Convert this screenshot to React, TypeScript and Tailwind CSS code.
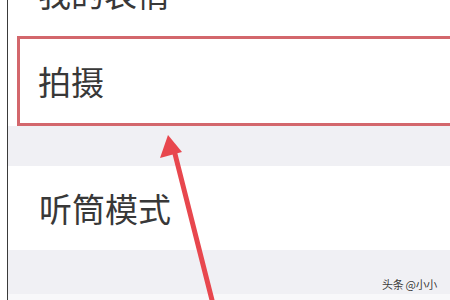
import React from 'react';

const cjk = { fontFamily: '"Noto Sans CJK SC", "Noto Sans", sans-serif' };

function Row({ label }: { label: string }) {
  return <span className="text-[33px] leading-none text-[#383838]">{label}</span>;
}

export default function App() {
  return (
    <div className="relative w-[450px] h-[300px] overflow-hidden bg-white flex" style={cjk}>
      {/* left edge of the phone frame */}
      <div className="w-[7px] bg-white" />
      <div className="w-px bg-[#3a3a3a]" />

      <div className="flex-1 flex flex-col">
        {/* cut-off row */}
        <div className="h-[85px] -mt-[49px] flex items-center pl-[30px] bg-white shrink-0">
          <Row label="我的表情" />
        </div>

        {/* highlighted row */}
        <div className="h-[90px] shrink-0 bg-white ml-[9px] -mr-[10px] border-[3px] border-[#d3676c] flex items-center pl-[18px]">
          <Row label="拍摄" />
        </div>

        <div className="h-[40px] shrink-0 bg-[#f0f0f4]" />

        <div className="h-[84px] shrink-0 bg-white flex items-center pl-[31px]">
          <Row label="听筒模式" />
        </div>

        <div className="h-[44px] shrink-0 bg-[#f0f0f4]" />
        <div className="flex-1 bg-[#f8f8fa]" />
      </div>

      {/* arrow annotation */}
      <svg className="absolute left-0 top-0" width="450" height="300" viewBox="0 0 450 300">
        <line x1="174" y1="150" x2="213" y2="304" stroke="#e8474e" strokeWidth="5" strokeLinecap="round" />
        <polygon points="168,135 160,158 182,152" fill="#e8474e" />
      </svg>

      {/* watermark */}
      <div className="absolute left-[382px] top-[279px] text-[11px] leading-none tracking-[-0.3px] text-[#3a3a3a]" style={{ textShadow: '0 0 2px #fff' }}>
        头条 @小小
      </div>
    </div>
  );
}
